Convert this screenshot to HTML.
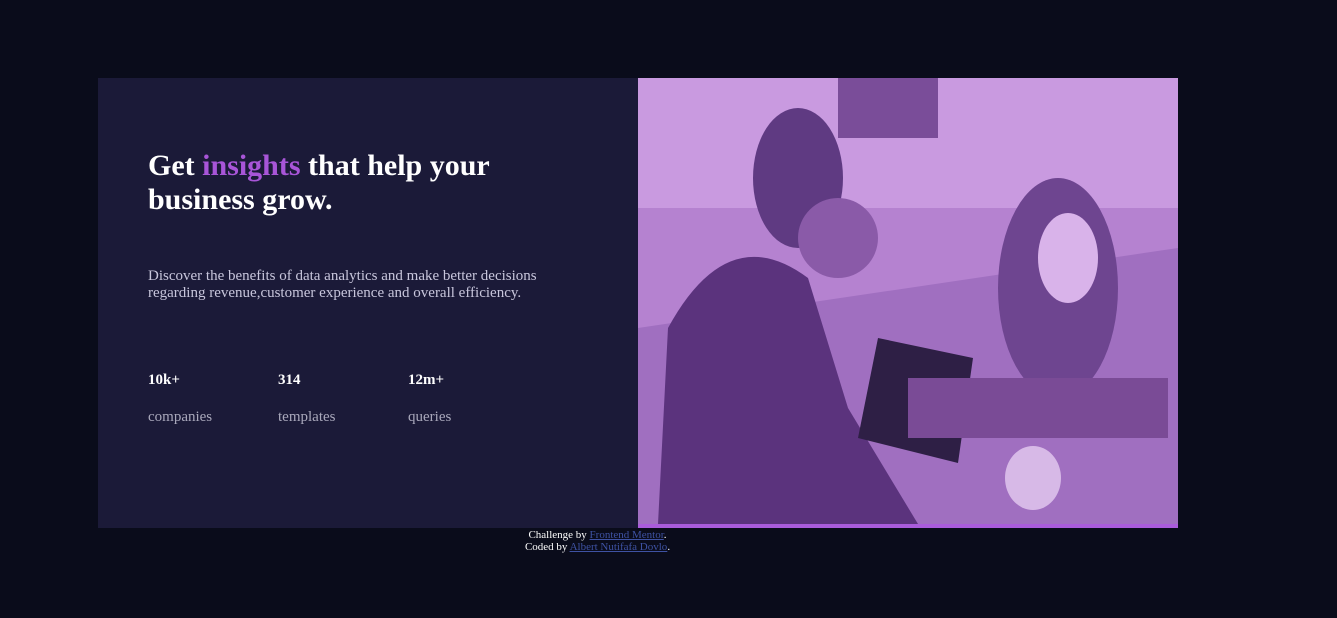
<!DOCTYPE html>
<html><head><style>
body{margin:0;width:1337px;height:618px;background:#0a0c1b;font-family:"Liberation Serif",serif;position:relative;overflow:hidden}
.card{position:absolute;left:98px;top:78px;width:540px;height:450px;background:#1b1a38}
h1{position:absolute;left:50px;top:71px;margin:0;font-size:30px;line-height:34px;color:#fff;font-weight:bold;width:400px}
h1 span{color:#a855d8}
p{position:absolute;left:50px;top:190px;margin:0;font-size:15px;line-height:17px;color:#c8c6dc;width:410px}
.s{position:absolute;top:294px;font-size:15px;color:#fff;font-weight:bold}
.l{position:absolute;top:331px;font-size:15px;color:#a9a8bb}
.img{position:absolute;left:638px;top:78px;width:540px;height:446px;overflow:hidden;background:#b27fcf}
.bar{position:absolute;left:638px;top:524px;width:540px;height:4px;background:#aa5cdb}
.f{position:absolute;top:529px;left:0;width:1195px;text-align:center;font-size:11px;line-height:12px;color:#fff}
.f a{color:#3e52a3;text-decoration:underline}
</style></head><body>
<div class="card">
<h1>Get <span>insights</span> that help your business grow.</h1>
<p>Discover the benefits of data analytics and make better decisions regarding revenue,customer experience and overall efficiency.</p>
<div class="s" style="left:50px">10k+</div><div class="l" style="left:50px">companies</div>
<div class="s" style="left:180px">314</div><div class="l" style="left:180px">templates</div>
<div class="s" style="left:310px">12m+</div><div class="l" style="left:310px">queries</div>
</div>
<div class="img">
<svg width="540" height="446" viewBox="0 0 540 446">
<rect width="540" height="446" fill="#b582d0"/>
<rect x="0" y="0" width="540" height="130" fill="#c99ae0"/>
<rect x="200" y="0" width="100" height="60" fill="#7a4d99"/>
<polygon points="0,250 540,170 540,446 0,446" fill="#a06fc0"/>
<ellipse cx="160" cy="100" rx="45" ry="70" fill="#5f3a82"/>
<ellipse cx="420" cy="210" rx="60" ry="110" fill="#6e4590"/>
<ellipse cx="430" cy="180" rx="30" ry="45" fill="#d9b3ea"/>
<path d="M20,446 L30,250 Q90,140 170,200 L210,330 L280,446 Z" fill="#5b337d"/>
<path d="M240,260 L335,280 L320,385 L220,360 Z" fill="#2e1f45"/>
<rect x="270" y="300" width="260" height="60" fill="#7a4b96"/>
<ellipse cx="395" cy="400" rx="28" ry="32" fill="#d7b9e7"/>
<ellipse cx="200" cy="160" rx="40" ry="40" fill="#8a5aa8"/>
</svg>
</div>
<div class="bar"></div>
<div class="f">Challenge by <a>Frontend Mentor</a>.<br>Coded by <a>Albert Nutifafa Dovlo</a>.</div>
</body></html>
